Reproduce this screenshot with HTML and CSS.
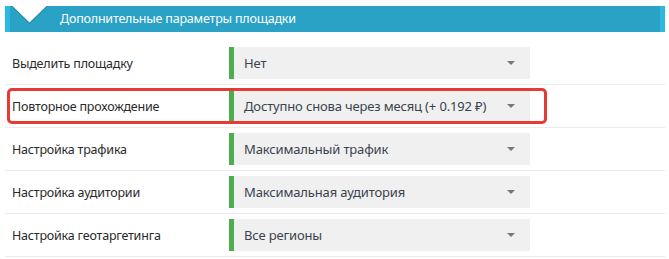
FILE: index.html
```html
<!DOCTYPE html>
<html lang="ru">
<head>
<meta charset="utf-8">
<title>Дополнительные параметры площадки</title>
<link rel="stylesheet" href="styles.css">
</head>
<body>
<div class="panel">
  <div class="panel-head">
    <svg class="chevron" width="37" height="18" viewBox="0 0 37 18">
      <polygon points="0,0 37,0 18.5,18" fill="#1f8db0"/>
      <polygon points="1.5,0 35.5,0 18.5,16.5" fill="#ffffff"/>
    </svg>
    <span class="panel-title">Дополнительные параметры площадки</span>
  </div>
  <div class="rows">
    <div class="row">
      <div class="label">Выделить площадку</div>
      <div class="select"><span class="value">Нет</span><span class="caret"></span></div>
    </div>
    <div class="row highlighted">
      <div class="label">Повторное прохождение</div>
      <div class="select"><span class="value">Доступно снова через месяц (+ 0.192 ₽)</span><span class="caret"></span></div>
      <div class="mark"></div>
    </div>
    <div class="row">
      <div class="label">Настройка трафика</div>
      <div class="select"><span class="value">Максимальный трафик</span><span class="caret"></span></div>
    </div>
    <div class="row">
      <div class="label">Настройка аудитории</div>
      <div class="select"><span class="value">Максимальная аудитория</span><span class="caret"></span></div>
    </div>
    <div class="row">
      <div class="label">Настройка геотаргетинга</div>
      <div class="select"><span class="value">Все регионы</span><span class="caret"></span></div>
    </div>
  </div>
</div>
</body>
</html>
```

FILE: styles.css
```css
html, body {
  margin: 0;
  padding: 0;
  background: #ffffff;
}

body {
  font-family: "Noto Sans", "Open Sans", sans-serif;
  font-size: 13px;
  color: #2a2a2a;
}

.panel {
  margin: 6px 0 0 5px;
  width: 660px;
}

.panel-head {
  position: relative;
  height: 26px;
  background: #2aa2c6;
  border-left: 5px solid #2cb8df;
  border-right: 5px solid #2cb8df;
  box-sizing: border-box;
  display: flex;
  align-items: center;
  padding-left: 50px;
}

.chevron {
  position: absolute;
  left: 1px;
  top: 0;
  display: block;
}

.panel-title {
  color: #ffffff;
  font-size: 12.5px;
  letter-spacing: -0.2px;
  line-height: 26px;
}

.rows {
  margin-top: 10px;
}

.row {
  position: relative;
  display: flex;
  align-items: center;
  padding: 5px 0 5px 7px;
  border-bottom: 1px solid #ebebeb;
}

.label {
  flex: 0 0 217px;
  color: #2a2a2a;
  font-size: 12.5px;
  letter-spacing: -0.2px;
}

.select {
  width: 301px;
  height: 32px;
  box-sizing: border-box;
  border-left: 5px solid #4cae4f;
  background: #f0f0f0;
  display: flex;
  align-items: center;
  justify-content: space-between;
  padding: 0 15px 0 10px;
}

.value {
  color: #38434f;
  white-space: nowrap;
  letter-spacing: -0.15px;
}

.caret {
  width: 0;
  height: 0;
  border-left: 4px solid transparent;
  border-right: 4px solid transparent;
  border-top: 4px solid #777777;
}

.mark {
  position: absolute;
  left: 2px;
  top: 3px;
  width: 540px;
  height: 36px;
  box-sizing: border-box;
  border: 3px solid #e53a35;
  border-radius: 5px;
  pointer-events: none;
}
```
